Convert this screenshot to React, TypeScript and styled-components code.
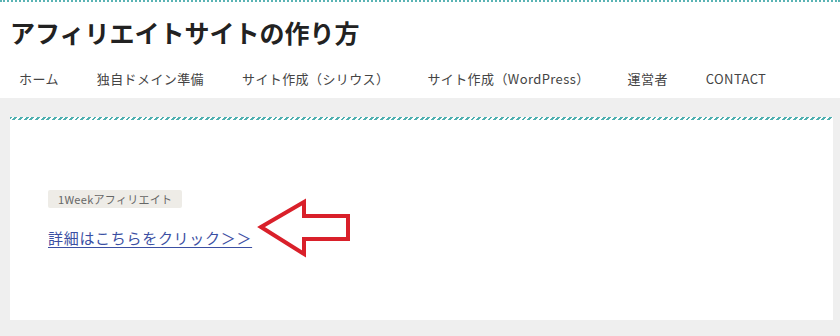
import React from "react";
import styled, { createGlobalStyle } from "styled-components";

const Global = createGlobalStyle`
  html, body { margin: 0; padding: 0; background: #ffffff; }
  body { font-family: "Noto Sans CJK JP", "Noto Sans", sans-serif; color: #333; }
`;

const Header = styled.header`
  background: #fff;
  border-top: 2px dotted #5ab4b4;
`;

const Title = styled.h1`
  margin: 0;
  padding: 12px 10px 8px;
  font-size: 25px;
  line-height: 36px;
  font-weight: 700;
  color: #222;
  letter-spacing: 0;
`;

const Nav = styled.nav`
  display: flex;
  height: 40px;
  align-items: center;
`;

const NavItem = styled.a`
  padding: 0 19px;
  font-size: 13px;
  letter-spacing: 0.4px;
  color: #444;
  text-decoration: none;
  white-space: nowrap;
`;

const Main = styled.main`
  background: #efefef;
  padding: 19px 7px 16px 10px;
`;

const Card = styled.section`
  background: #fff;
  height: 203px;
  padding: 70px 38px 0;
  box-sizing: border-box;
  border-top: 3px solid transparent;
  border-image: repeating-linear-gradient(-45deg, #4fb0b0 0 2px, #ffffff 2px 4px) 1;
  border-image-slice: 3 0 0 0;
`;

const Badge = styled.span`
  display: block;
  width: fit-content;
  background: #eeece7;
  color: #666;
  font-size: 11px;
  line-height: 18px;
  padding: 0 10px;
  border-radius: 2px;
  letter-spacing: 0.3px;
`;

const LinkRow = styled.div`
  display: flex;
  align-items: center;
  margin-top: 18px;
  height: 24px;
`;

const DetailLink = styled.a`
  font-size: 15px;
  line-height: 24px;
  letter-spacing: 0.7px;
  color: #3b4fa3;
  text-decoration: underline;
  text-underline-offset: 3px;
  margin-right: 4px;
  white-space: nowrap;
`;

const Arrow = styled.svg`
  display: block;
  flex: none;
  margin: -27px 0 -9px 0;
`;

const navItems = [
  "ホーム",
  "独自ドメイン準備",
  "サイト作成（シリウス）",
  "サイト作成（WordPress）",
  "運営者",
  "CONTACT",
];

export default function App() {
  return (
    <>
      <Global />
      <Header>
        <Title>アフィリエイトサイトの作り方</Title>
        <Nav>
          {navItems.map((n) => (
            <NavItem key={n} href="#">
              {n}
            </NavItem>
          ))}
        </Nav>
      </Header>
      <Main>
        <Card>
          <Badge>1Weekアフィリエイト</Badge>
          <LinkRow>
            <DetailLink href="#">詳細はこちらをクリック＞＞</DetailLink>
            <Arrow width="96" height="62" viewBox="0 0 96 62">
              <polygon
                points="5,29 48,4 48,18 92,18 92,41 48,41 48,56"
                fill="none"
                stroke="#d9202a"
                strokeWidth="4"
                strokeLinejoin="miter"
              />
            </Arrow>
          </LinkRow>
        </Card>
      </Main>
    </>
  );
}
